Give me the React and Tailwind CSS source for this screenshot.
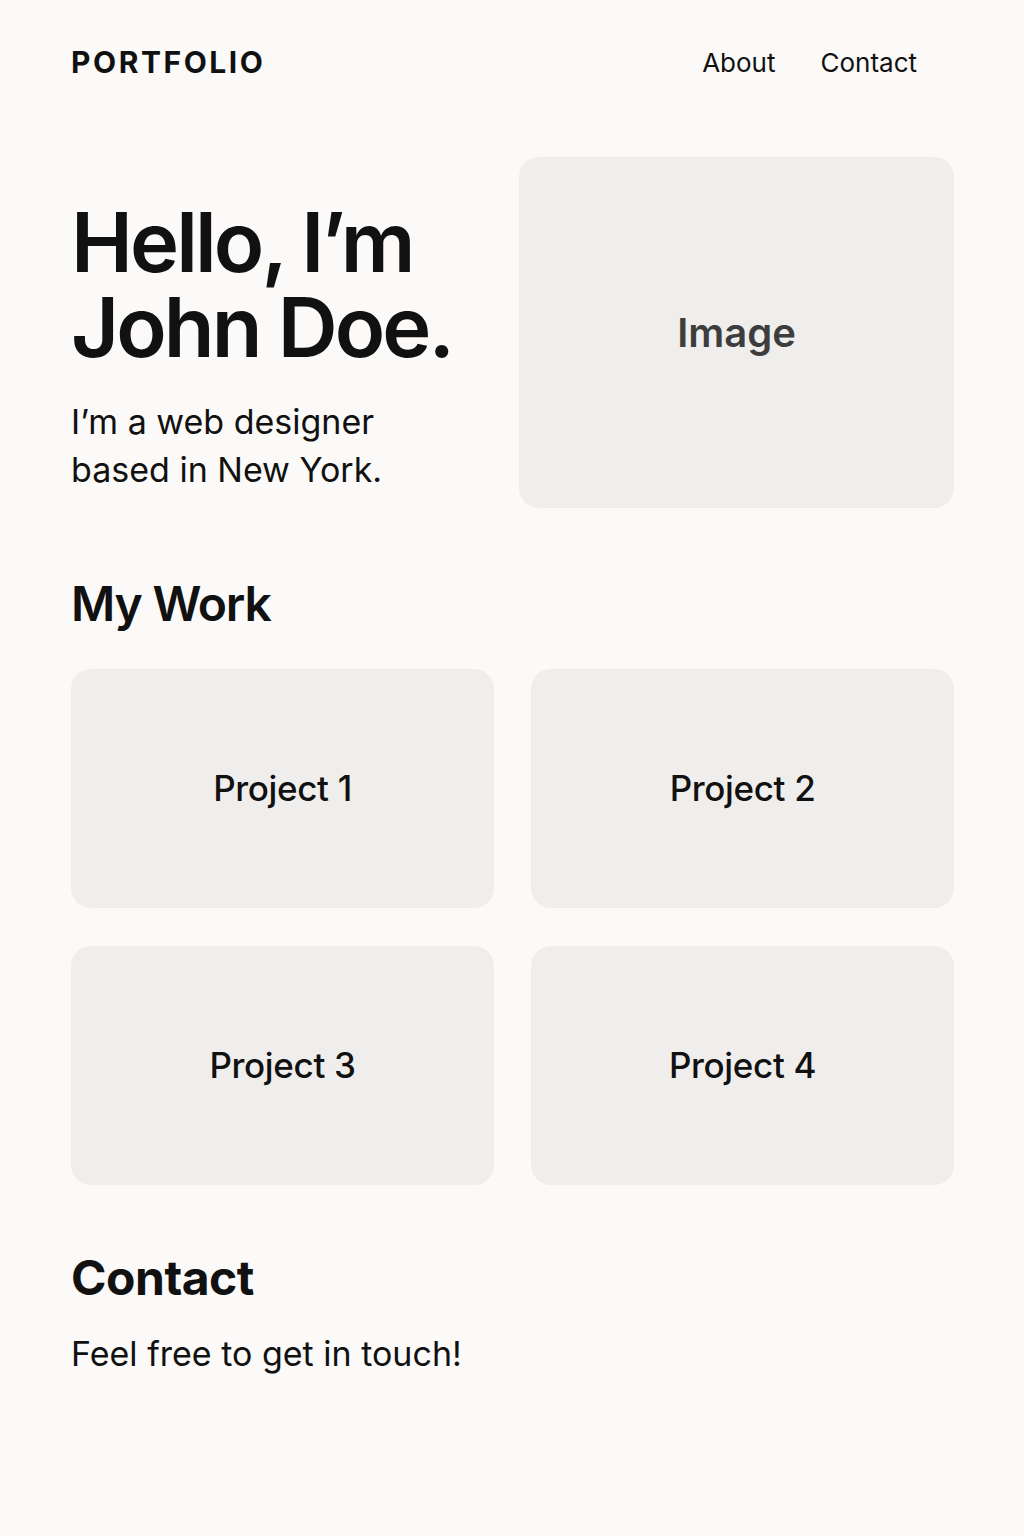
export default function App() {
  const projects = ['Project 1', 'Project 2', 'Project 3', 'Project 4'];

  return (
    <div className="min-h-[1536px] bg-[#fbfaf8] text-[#111111] font-['Inter',sans-serif] pl-[71px] pr-[70px]">
      <header className="h-[124px] flex items-center justify-between">
        <div className="text-[30px] font-bold tracking-[0.085em]">PORTFOLIO</div>
        <nav className="flex gap-[45px] pr-[37px] text-[26px]">
          <a href="#about">About</a>
          <a href="#contact">Contact</a>
        </nav>
      </header>

      <section className="mt-[33px] flex justify-between">
        <div className="pt-[43px]">
          <h1 className="text-[83px] leading-[85px] font-semibold tracking-[-0.035em]">
            Hello, I’m
            <br />
            John Doe.
          </h1>
          <p className="mt-[28px] text-[34px] leading-[48px]">
            I’m a web designer
            <br />
            based in New York.
          </p>
        </div>
        <div className="w-[435px] h-[351px] rounded-[20px] bg-[#efeeec] flex items-center justify-center">
          <span className="text-[40px] font-semibold text-[#3d3d3d]">Image</span>
        </div>
      </section>

      <section className="mt-[67px]">
        <h2 className="text-[48px] leading-[1.2] font-semibold tracking-[-0.025em]">My Work</h2>
        <div className="mt-[36px] grid grid-cols-2 gap-x-[37px] gap-y-[38px]">
          {projects.map((p) => (
            <div key={p} className="h-[239px] rounded-[20px] bg-[#efeeec] flex items-center justify-center">
              <span className="text-[35px] font-medium tracking-[-0.01em]">{p}</span>
            </div>
          ))}
        </div>
      </section>

      <section id="contact" className="mt-[64px]">
        <h2 className="text-[48px] leading-[1.2] font-bold tracking-[-0.01em]">Contact</h2>
        <p className="mt-[24px] text-[34px] leading-[48px]">Feel free to get in touch!</p>
      </section>
    </div>
  );
}
